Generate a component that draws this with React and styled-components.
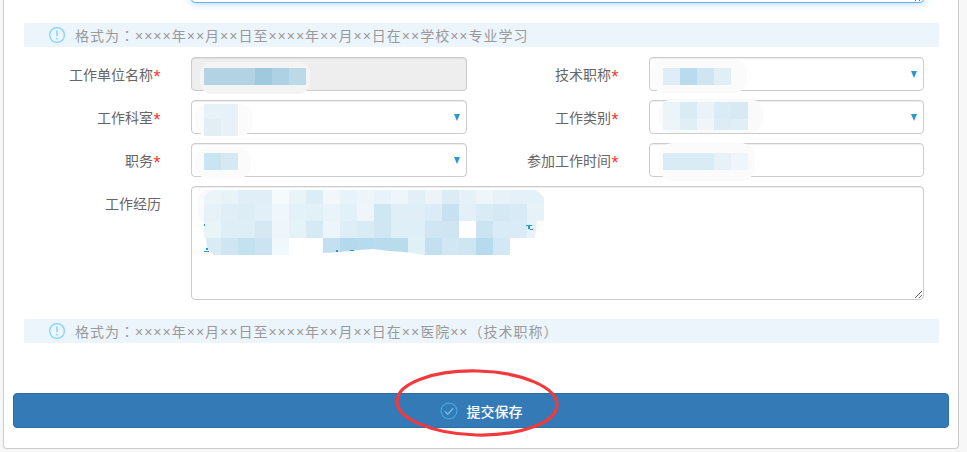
import React from 'react'
import styled, { createGlobalStyle } from 'styled-components'

const W = null

const workHistory = [
  ['#eaf4f9', '#e8f3f8', '#e0eff7', '#e0eff7', '#f5fafd', '#e9f4f9', '#dcedf6', '#f1f7fb', '#e7f2f9', '#edf5fb', '#e8f3f9', '#edf6fa', '#e2eff7', '#ecf4fa', '#dcecf5', '#e4f1f8', '#eef6fb', '#e7f2f7', '#e4f1f8', '#e4f1f8'],
  ['#e6f2f8', '#e0eff7', '#dcedf6', '#e1f0f8', '#f0f7fc', '#e3f1f8', '#e2f0f8', '#e9f3fa', '#e2f0f8', '#eef5fb', '#cfe7f3', '#e0eff7', '#e0eff7', '#dbecf6', '#c6e2f1', '#e3f0f8', '#d9ecf5', '#d5e9f4', '#d7eaf5', '#e6f2f8'],
  ['#e9f4f9', '#deeef6', '#deeef6', '#d6e9f3', '#eef6fb', '#e5f2f8', '#d6eaf4', '#edf5fc', '#deeef7', '#d9ebf5', '#d0e6f3', '#deeff7', '#deeff7', '#d0e6f3', '#cfe5f2', '#ffffff', '#cce3f2', '#d9ebf6', '#d9ebf6', '#e8f3f9'],
  ['#d9ecf5', '#cfe6f2', '#c3e2ef', '#cce4f1', '#f0f8fc', W, W, '#c2e0f0', '#b4d9ed', '#b6dbef', '#b8dcee', '#b9dcec', '#e0f0f7', '#c2e0f0', '#d1e7f3', '#cee6f2', '#b6dbee', '#d2e8f4', W, W],
]

function Mosaic({ left, top, rows, heights, blob, blobFill = '#fafafa', children }) {
  const width = rows[0].length * 17
  const height = heights.reduce((a, b) => a + b, 0)
  let y = 0
  return (
    <MosaicLayer $left={left} $top={top} width={width} height={height} viewBox={`0 0 ${width} ${height}`}>
      {blob && <rect x={blob[0]} y={blob[1]} width={blob[2]} height={blob[3]} rx={blob[4]} fill={blobFill} />}
      {rows.map((row, r) => {
        const rowY = y
        y += heights[r]
        return row.map((fill, c) => fill && (
          <rect key={`${r}-${c}`} x={c * 17} y={rowY} width="17" height={heights[r]} fill={fill} />
        ))
      })}
      {children}
    </MosaicLayer>
  )
}

function InfoIcon() {
  return (
    <svg width="18" height="18" viewBox="0 0 18 18" fill="none">
      <circle cx="9" cy="9" r="7.4" stroke="#80d4ff" strokeWidth="1.3" />
      <path d="M9 4.8v5.4M9 12v1.4" stroke="#80d4ff" strokeWidth="1.5" />
    </svg>
  )
}

function CheckIcon() {
  return (
    <svg width="18" height="18" viewBox="0 0 18 18" fill="none">
      <circle cx="9" cy="9" r="7.9" stroke="#45a6dc" strokeWidth="1.2" />
      <path d="M4.8 9.2l3 3 5.4-6" stroke="#6fbce6" strokeWidth="1.4" />
    </svg>
  )
}

function FormLabel({ children, required }) {
  return (
    <Label>
      {children}
      {required && <Star>*</Star>}
    </Label>
  )
}

export default function App() {
  return (
    <Page>
      <GlobalStyle />
      <Panel>
        <Form>
          <TopGrid>
            <TopTextArea readOnly />
          </TopGrid>
          <Hint>
            <InfoIcon />
            <span>格式为：××××年××月××日至××××年××月××日在××学校××专业学习</span>
          </Hint>
          <FieldGrid>
            <FormLabel required>工作单位名称</FormLabel>
            <Field>
              <TextInput disabled />
              <Mosaic left={13} top={11} heights={[17]} blob={[-4, -6, 110, 32, 12]} blobFill="#f4f4f4"
                rows={[['#b3d3e4', '#b3d3e4', '#b3d3e4', '#9fc9de', '#aed2e3', '#bcd9e7']]} />
            </Field>
            <FormLabel required>技术职称</FormLabel>
            <Field>
              <SelectInput />
              <Caret />
              <Mosaic left={14} top={11} heights={[17]} blob={[-12, -9, 96, 34, 14]} blobFill="#fbfbfb"
                rows={[['#dfeef6', '#b8dcee', '#cfe6f2', '#e0eff6']]} />
            </Field>

            <FormLabel required>工作科室</FormLabel>
            <Field>
              <SelectInput />
              <Caret />
              <Mosaic left={13} top={4} heights={[15, 17]} blob={[-9, 0, 58, 32, 14]} blobFill="#fbfbfb"
                rows={[['#e6f2f7', '#e6f2f7'], ['#e2eef4', '#e8f2f6']]} />
            </Field>
            <FormLabel required>工作类别</FormLabel>
            <Field>
              <SelectInput />
              <Caret />
              <Mosaic left={14} top={2} heights={[17, 11]} blob={[-4, -3, 104, 34, 14]} blobFill="#fafafa"
                rows={[
                  ['#eaf4f9', '#d9ebf4', '#eaf4f8', '#d9ebf5', '#d7eaf4'],
                  ['#eef5f9', '#e0eef5', '#f0f5f9', '#deedf5', '#e0eef6'],
                ]} />
            </Field>

            <FormLabel required>职务</FormLabel>
            <Field>
              <SelectInput />
              <Caret />
              <Mosaic left={13} top={10} heights={[17]} blob={[-9, -5, 56, 30, 12]} blobFill="#fbfbfb"
                rows={[['#c9e5f1', '#d6e9f3']]} />
            </Field>
            <FormLabel required>参加工作时间</FormLabel>
            <Field>
              <TextInput />
              <Mosaic left={14} top={10} heights={[17]} blob={[-4, -10, 96, 38, 14]} blobFill="#fbfbfb"
                rows={[['#d9ecf5', '#d9ecf5', '#d9ecf5', '#e6f2f8', '#eef6fb']]} />
            </Field>

            <FormLabel>工作经历</FormLabel>
            <WideField>
              <BigTextArea readOnly />
              <Mosaic left={13} top={4} heights={[14, 17, 17, 17]} rows={workHistory} blob={[-6, 0, 20, 34, 10]}>
                <polygon points="-1,0 9,0 3,3 -1,9" fill="#fafafa" />
                <polygon points="330,-1 341,-1 341,9 336,3" fill="#fff" />
                <polygon points="333,31 341,31 341,48 331,48" fill="#fff" />
                <polygon points="-1,48 2,48 3,58 10,65 -1,65" fill="#fff" />
                <rect x="0" y="34" width="1" height="2" fill="#2a97d0" />
                <rect x="0" y="61" width="5" height="1" fill="#2a97d0" />
                <rect x="2" y="58" width="2" height="2" fill="#2a97d0" />
                <rect x="322" y="35" width="6" height="1" fill="#2a97d0" />
                <rect x="324" y="36" width="2" height="3" fill="#2a97d0" />
                <rect x="326" y="39" width="3" height="1" fill="#2a97d0" />
                <polygon points="119,66 119,63 136,62 155,60 170,59 185,61 200,62 221,65 238,65 255,66" fill="#fff" />
                <rect x="132" y="60" width="2" height="2" fill="#2a97d0" />
                <rect x="146" y="60" width="4" height="1" fill="#2a97d0" />
              </Mosaic>
            </WideField>
          </FieldGrid>
          <LowerHint>
            <InfoIcon />
            <span>格式为：××××年××月××日至××××年××月××日在××医院××（技术职称）</span>
          </LowerHint>
        </Form>
        <ButtonRow>
          <SubmitButton type="button">
            <CheckIcon />
            <span>提交保存</span>
          </SubmitButton>
          <Annotation width="166" height="70" viewBox="0 0 166 70" fill="none">
            <ellipse cx="82" cy="35" rx="80" ry="32" transform="rotate(1.5 82 35)" stroke="#f23a3c" strokeWidth="3.2" />
          </Annotation>
        </ButtonRow>
      </Panel>
    </Page>
  )
}

const GlobalStyle = createGlobalStyle`
    html, body {
        margin: 0;
        padding: 0;
        background: #f7f7f7;
        overflow: hidden;
    }
    * {
        box-sizing: border-box;
    }
`

const Page = styled.div`
    height: 452px;
    overflow: hidden;
    padding: 0 8px 0 3px;
    font-family: "Liberation Sans", "Noto Sans CJK SC", sans-serif;
    font-size: 14px;
`

const Panel = styled.div`
    margin-top: -60px;
    padding: 0 9px 20px;
    background: #fff;
    border: 1px solid #ccc;
    border-top: 0;
    border-radius: 0 0 4px 4px;
`

const Form = styled.div`
    padding: 0 10px 0 11px;
`

const FieldGrid = styled.div`
    display: grid;
    grid-template-columns: 137px 276px 122px 275px;
    column-gap: 30px;
    row-gap: 9px;
`

const TopGrid = styled(FieldGrid)`
    height: 63px;
`

const TopTextArea = styled.textarea`
    grid-column: 2 / -1;
    height: 63px;
    border: 1px solid #66afe9;
    border-radius: 4px;
    outline: none;
    box-shadow: inset 0 1px 1px rgba(0, 0, 0, .075), 0 0 8px rgba(102, 175, 233, .6);
`

const Hint = styled.div`
    display: flex;
    align-items: center;
    gap: 9px;
    height: 24px;
    margin: 20px 0 10px;
    padding-left: 24px;
    background: #ecf5fb;
    color: #999;
    font-family: "Liberation Sans", "Noto Sans CJK TC", sans-serif;
    letter-spacing: 1px;
    white-space: nowrap;
`

const LowerHint = styled(Hint)`
    margin: 19px 0 0;
`

const Label = styled.label`
    padding-top: 9px;
    color: #666;
    line-height: 18px;
    text-align: right;
`

const Star = styled.span`
    display: inline-block;
    width: 8px;
    color: #f33;
    font-size: 18px;
    line-height: 14px;
    text-align: center;
    vertical-align: -3px;
`

const Field = styled.div`
    position: relative;
    height: 34px;
`

const WideField = styled.div`
    position: relative;
    grid-column: 2 / -1;
    height: 114px;
`

const controlStyle = `
    display: block;
    width: 100%;
    height: 100%;
    background: #fff;
    border: 1px solid #ccc;
    border-radius: 4px;
    box-shadow: inset 0 1px 1px rgba(0, 0, 0, .075);
    outline: none;
`

const TextInput = styled.input`
    ${controlStyle}
    &:disabled {
        background: #eee;
    }
`

const SelectInput = styled.select`
    ${controlStyle}
    appearance: none;
`

const BigTextArea = styled.textarea`
    ${controlStyle}
`

const Caret = styled.span`
    position: absolute;
    top: 14px;
    right: 7px;
    width: 0;
    height: 0;
    border-top: 7px solid #2a97d0;
    border-left: 3px solid transparent;
    border-right: 3px solid transparent;
`

const MosaicLayer = styled.svg`
    position: absolute;
    left: ${p => p.$left}px;
    top: ${p => p.$top}px;
    overflow: visible;
`

const ButtonRow = styled.div`
    position: relative;
    margin-top: 50px;
`

const SubmitButton = styled.button`
    display: flex;
    align-items: center;
    justify-content: center;
    gap: 9px;
    width: 100%;
    height: 35px;
    padding: 1px 0 0;
    background: #337ab7;
    border: 1px solid #2e6da4;
    border-radius: 4px;
    color: #fff;
    font: inherit;
    font-weight: 500;
`

const Annotation = styled.svg`
    position: absolute;
    left: 382px;
    top: -25px;
    pointer-events: none;
`
